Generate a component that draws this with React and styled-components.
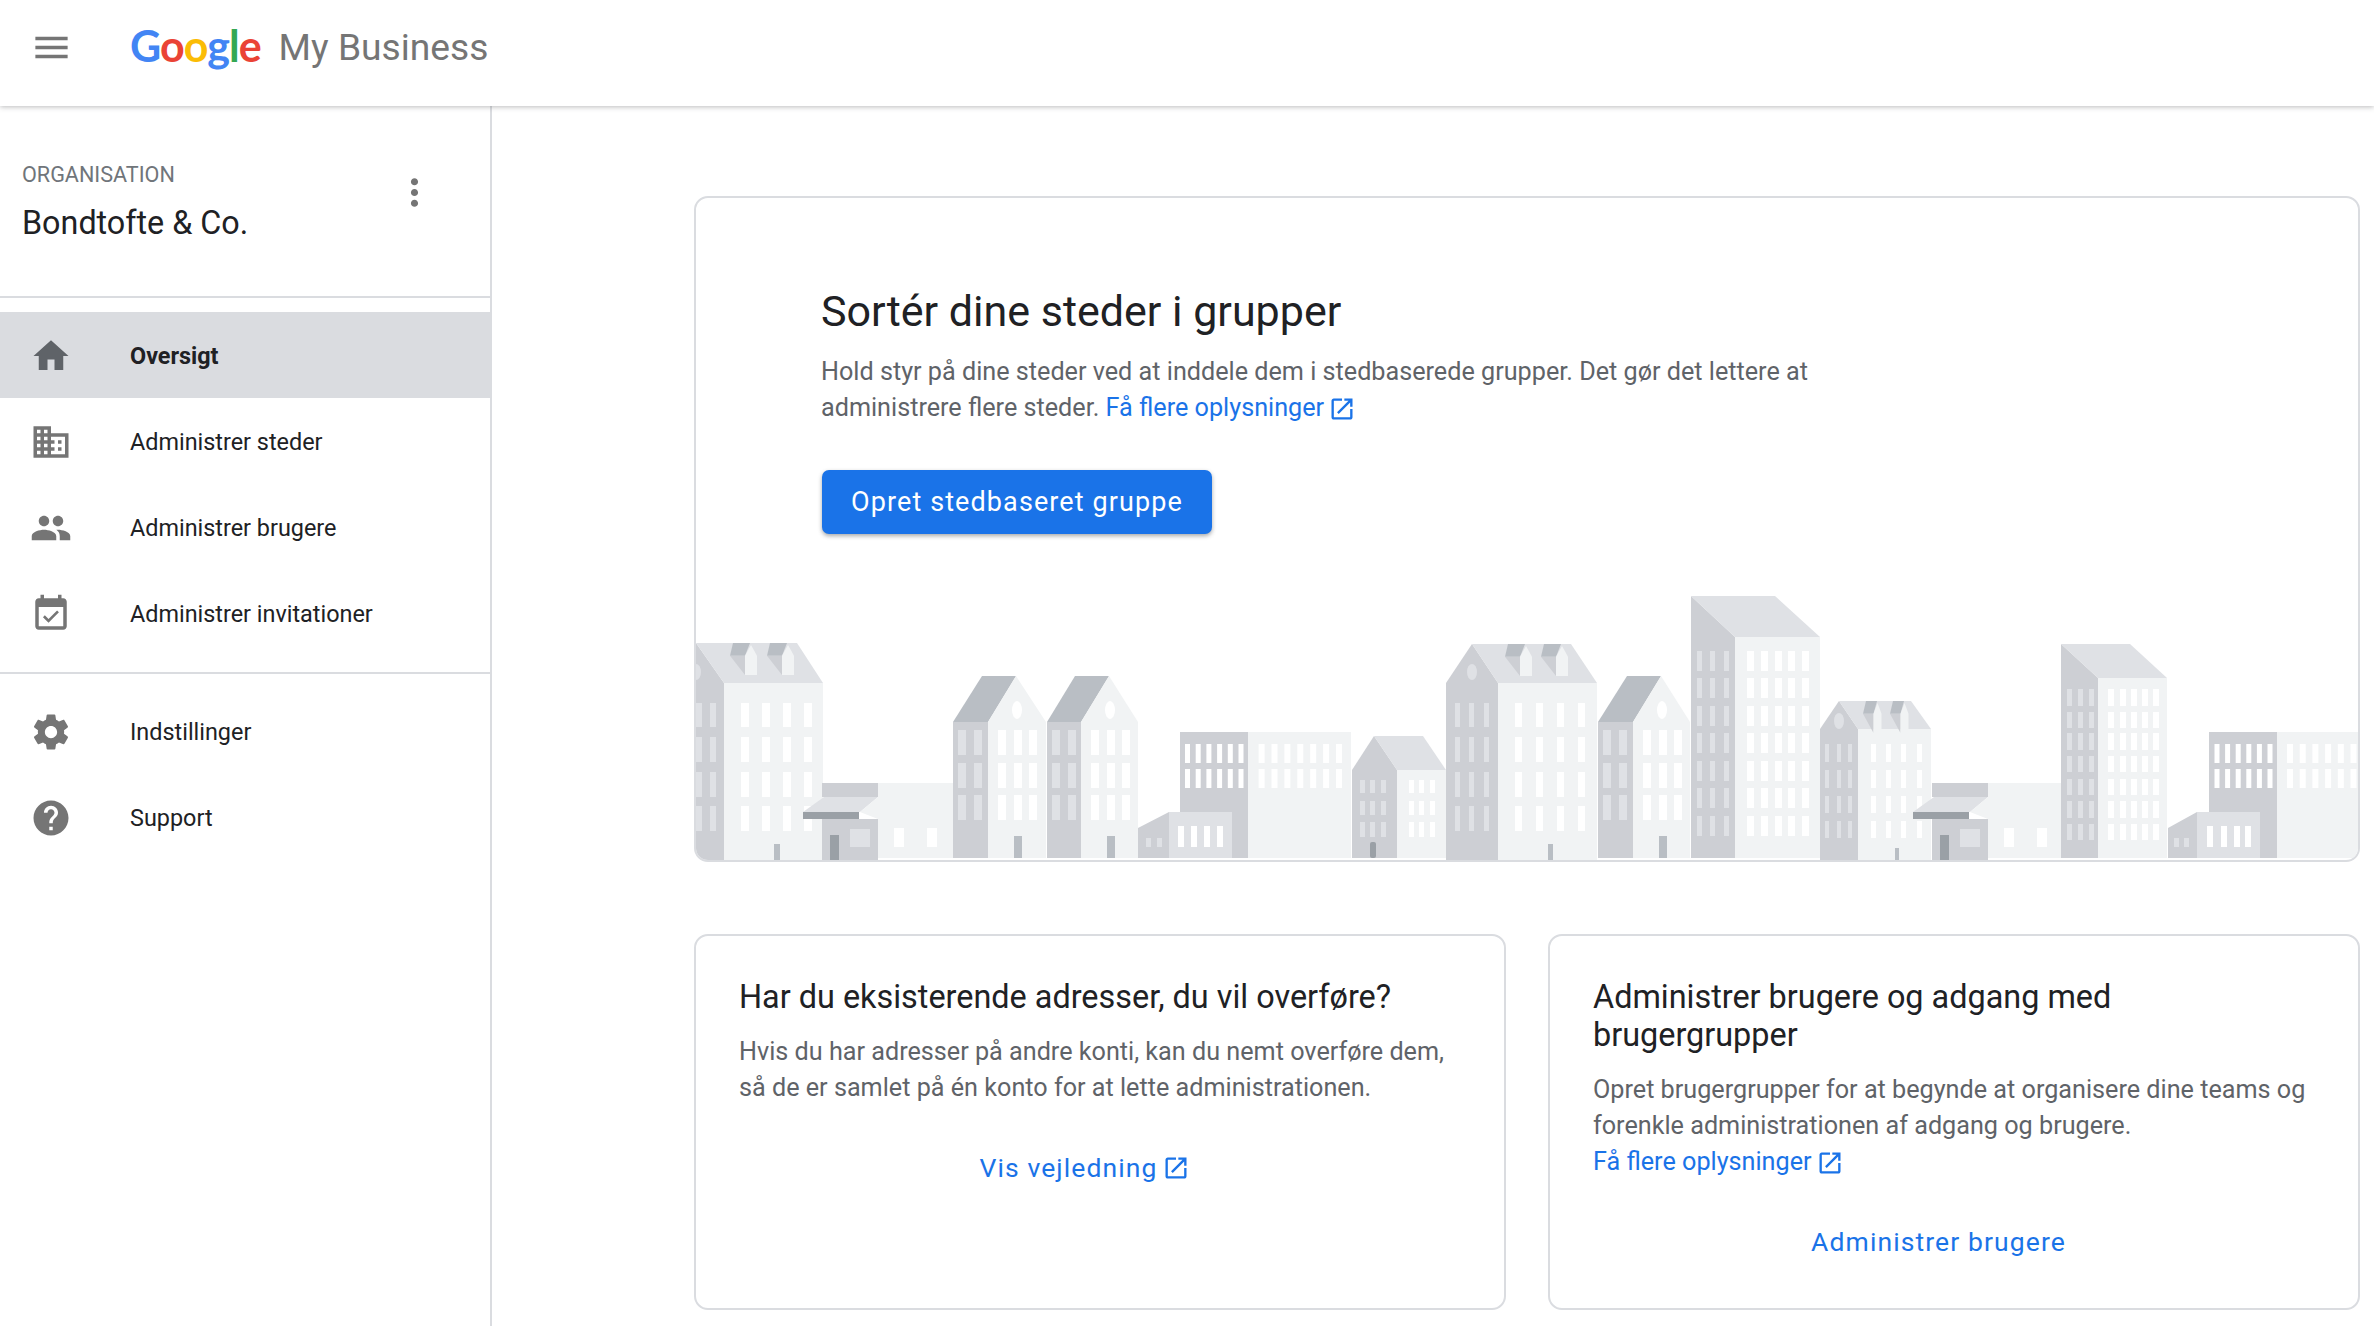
import React from 'react'
import styled, { createGlobalStyle } from 'styled-components'

const GlobalStyle = createGlobalStyle`
  html, body {
    margin: 0;
    padding: 0;
    background: #fff;
    font-family: Roboto, "Liberation Sans", sans-serif;
  }
  * { box-sizing: border-box; }
`

const Page = styled.div`
  width: 2374px;
  height: 1326px;
  overflow: hidden;
  display: flex;
  flex-direction: column;
`

const Header = styled.header`
  position: relative;
  z-index: 2;
  flex: none;
  height: 106px;
  padding: 0 0 12px 30px;
  display: flex;
  align-items: center;
  background: #fff;
  box-shadow: 0 1px 5px rgba(60, 64, 67, 0.35);
`

const Logo = styled.div`
  margin: 0 0 2px 57px;
  display: flex;
  align-items: flex-start;
  gap: 18px;
`

const GoogleWord = styled.span`
  font-family: Lato, sans-serif;
  font-size: 43px;
  font-weight: 700;
  line-height: 52px;
  letter-spacing: -1px;
`

const Letter = styled.span`
  color: ${(p) => p.$c};
`

const ProductName = styled.span`
  margin-top: 1px;
  font-size: 37.2px;
  line-height: 52px;
  color: #757575;
`

const Body = styled.div`
  flex: 1;
  display: flex;
  min-height: 0;
`

const Sidebar = styled.aside`
  flex: none;
  width: 492px;
  border-right: 2px solid #dadce0;
`

const OrgBlock = styled.div`
  height: 192px;
  padding: 57px 54px 0 22px;
  display: flex;
  justify-content: space-between;
  align-items: flex-start;
  border-bottom: 2px solid #dadce0;
`

const OrgLabel = styled.div`
  font-size: 21.6px;
  line-height: 24px;
  color: #70757a;
`

const OrgName = styled.div`
  margin-top: 16px;
  font-size: 32.3px;
  line-height: 40px;
  color: #202124;
`

const MoreButton = styled.div`
  margin-top: 8px;
  display: flex;
`

const NavList = styled.nav`
  padding: 14px 0 ${(p) => (p.$divider ? '16px' : '14px')};
  border-bottom: ${(p) => (p.$divider ? '2px solid #dadce0' : 'none')};
`

const NavItem = styled.div`
  height: 86px;
  padding: 2px 0 0 30px;
  display: flex;
  align-items: center;
  gap: 58px;
  font-size: 23.4px;
  font-weight: ${(p) => (p.$active ? 700 : 400)};
  color: #202124;
  background: ${(p) => (p.$active ? '#dadce0' : 'transparent')};
`

const Main = styled.main`
  flex: 1;
  padding: 90px 14px 0 202px;
  display: flex;
  flex-direction: column;
  gap: 72px;
`

const HeroCard = styled.section`
  height: 666px;
  display: flex;
  flex-direction: column;
  border: 2px solid #dadce0;
  border-radius: 14px;
  overflow: hidden;
`

const HeroText = styled.div`
  flex: 1;
  padding: 87px 0 0 125px;
`

const HeroTitle = styled.h1`
  margin: 0 0 17px;
  font-size: 43px;
  line-height: 52px;
  font-weight: 400;
  color: #202124;
`

const Paragraph = styled.p`
  margin: 0;
  font-size: 25.2px;
  line-height: 36px;
  color: #5f6368;
`

const TextLink = styled.a`
  color: #1a73e8;
`

const LinkGlyph = styled.svg`
  margin-left: 4px;
  vertical-align: -7px;
`

const PrimaryButton = styled.button`
  margin: 44px 0 0 1px;
  width: 390px;
  height: 64px;
  padding: 0;
  border: none;
  border-radius: 7px;
  background: #1a73e8;
  color: #fff;
  font-family: inherit;
  font-size: 27px;
  font-weight: 400;
  letter-spacing: 1.1px;
  box-shadow: 0 2px 4px rgba(60, 64, 67, 0.45);
`

const Skyline = styled.svg`
  flex: none;
  display: block;
  width: 100%;
  height: 270px;
`

const CardRow = styled.div`
  display: grid;
  grid-template-columns: 1fr 1fr;
  gap: 42px;
`

const InfoCard = styled.section`
  height: 376px;
  padding: 42px 30px 0 43px;
  border: 2px solid #dadce0;
  border-radius: 14px;
`

const CardTitle = styled.h2`
  margin: 0 0 18px;
  font-size: 32.4px;
  line-height: 38px;
  font-weight: 400;
  color: #202124;
`

const CardAction = styled.a`
  margin-top: 44px;
  padding-right: 44px;
  display: flex;
  justify-content: center;
  align-items: center;
  gap: 4px;
  font-size: 26.5px;
  line-height: 36px;
  font-weight: 400;
  letter-spacing: 1.1px;
  color: #1a73e8;
`

const paths = {
  menu: 'M3 18h18v-2H3v2zm0-5h18v-2H3v2zm0-7v2h18V6H3z',
  more: 'M12 8c1.1 0 2-.9 2-2s-.9-2-2-2-2 .9-2 2 .9 2 2 2zm0 2c-1.1 0-2 .9-2 2s.9 2 2 2 2-.9 2-2-.9-2-2-2zm0 6c-1.1 0-2 .9-2 2s.9 2 2 2 2-.9 2-2-.9-2-2-2z',
  home: 'M10 20v-6h4v6h5v-8h3L12 3 2 12h3v8z',
  domain: 'M12 7V3H2v18h20V7H12zM6 19H4v-2h2v2zm0-4H4v-2h2v2zm0-4H4V9h2v2zm0-4H4V5h2v2zm4 12H8v-2h2v2zm0-4H8v-2h2v2zm0-4H8V9h2v2zm0-4H8V5h2v2zm10 12h-8v-2h2v-2h-2v-2h2v-2h-2V9h8v10zm-2-8h-2v2h2v-2zm0 4h-2v2h2v-2z',
  people: 'M16 11c1.66 0 2.99-1.34 2.99-3S17.66 5 16 5c-1.66 0-3 1.34-3 3s1.34 3 3 3zm-8 0c1.66 0 2.99-1.34 2.99-3S9.66 5 8 5C6.34 5 5 6.34 5 8s1.34 3 3 3zm0 2c-2.33 0-7 1.17-7 3.5V19h14v-2.5c0-2.33-4.67-3.5-7-3.5zm8 0c-.29 0-.62.02-.97.05 1.16.84 1.97 1.97 1.97 3.45V19h6v-2.5c0-2.33-4.67-3.5-7-3.5z',
  event: 'M16.53 11.06L15.47 10l-4.88 4.88-2.12-2.12-1.06 1.06L10.59 17l5.94-5.94zM19 3h-1V1h-2v2H8V1H6v2H5c-1.11 0-1.99.9-1.99 2L3 19c0 1.1.89 2 2 2h14c1.1 0 2-.9 2-2V5c0-1.1-.9-2-2-2zm0 16H5V8h14v11z',
  settings: 'M19.43 12.98c.04-.32.07-.64.07-.98s-.03-.66-.07-.98l2.11-1.65c.19-.15.24-.42.12-.64l-2-3.46c-.12-.22-.39-.3-.61-.22l-2.49 1c-.52-.4-1.08-.73-1.69-.98l-.38-2.65C14.46 2.18 14.25 2 14 2h-4c-.25 0-.46.18-.49.42l-.38 2.65c-.61.25-1.17.59-1.69.98l-2.49-1c-.23-.09-.49 0-.61.22l-2 3.46c-.13.22-.07.49.12.64l2.11 1.65c-.04.32-.07.65-.07.98s.03.66.07.98l-2.11 1.65c-.19.15-.24.42-.12.64l2 3.46c.12.22.39.3.61.22l2.49-1c.52.4 1.08.73 1.69.98l.38 2.65c.03.24.24.42.49.42h4c.25 0 .46-.18.49-.42l.38-2.65c.61-.25 1.17-.59 1.69-.98l2.49 1c.23.09.49 0 .61-.22l2-3.46c.12-.22.07-.49-.12-.64l-2.11-1.65zM12 15.5c-1.93 0-3.5-1.57-3.5-3.5s1.57-3.5 3.5-3.5 3.5 1.57 3.5 3.5-1.57 3.5-3.5 3.5z',
  help: 'M12 2C6.48 2 2 6.48 2 12s4.48 10 10 10 10-4.48 10-10S17.52 2 12 2zm1 17h-2v-2h2v2zm2.07-7.75l-.9.92C13.45 12.9 13 13.5 13 15h-2v-.5c0-1.1.45-2.1 1.17-2.83l1.24-1.26c.37-.36.59-.86.59-1.41 0-1.1-.9-2-2-2s-2 .9-2 2H8c0-2.21 1.79-4 4-4s4 1.79 4 4c0 .88-.36 1.68-.93 2.25z',
  open: 'M19 19H5V5h7V3H5c-1.11 0-2 .9-2 2v14c0 1.1.89 2 2 2h14c1.1 0 2-.9 2-2v-7h-2v7zM14 3v2h3.59l-9.83 9.83 1.41 1.41L19 6.41V10h2V3h-7z',
}

function Icon({ name, size = 42, color = '#757575' }) {
  return (
    <svg width={size} height={size} viewBox="0 0 24 24" fill={color} style={{ flex: 'none' }}>
      <path d={paths[name]} />
    </svg>
  )
}

const WALL = '#cdcfd4'
const ROOF = '#dfe1e5'
const LIGHT = '#f1f3f4'
const SLATE = '#b9bec4'
const BAR = '#9aa0a6'

// x/y grids of window panes
function Panes({ xs, rows, w, color }) {
  return rows.flatMap(([y1, y2]) =>
    xs.map((x) => <rect key={`${x}-${y1}`} x={x} y={y1} width={w} height={y2 - y1} fill={color} />)
  )
}

function Dormer({ x, w, wh, top, bottom }) {
  const mid = top + (bottom - top) * 0.4
  return (
    <g>
      <polygon points={`${x + 3},${top} ${x + w},${top} ${x + w * 0.75},${mid} ${x},${mid}`} fill={SLATE} />
      <polygon points={`${x},${mid} ${x + w * 0.75},${mid} ${x + w * 0.75},${bottom}`} fill="#cdcfd4" />
      <polygon
        points={`${x + w * 0.75},${mid} ${x + w * 0.75 + wh / 2},${top + 2} ${x + w * 0.75 + wh},${mid} ${x + w * 0.75 + wh},${bottom} ${x + w * 0.75},${bottom}`}
        fill={LIGHT}
      />
    </g>
  )
}

function Mansard({ xl, apex, xm, xr, roofR, top, eave, bottom, dark, light, rows, dw, lw, dormers, oval, door }) {
  return (
    <g>
      <polygon points={`${xl},${eave} ${apex},${top} ${xm},${eave} ${xm},${bottom} ${xl},${bottom}`} fill={WALL} />
      <polygon points={`${apex},${top} ${roofR},${top} ${xr},${eave} ${xm},${eave}`} fill={ROOF} />
      <rect x={xm} y={eave} width={xr - xm} height={bottom - eave} fill={LIGHT} />
      {oval && <ellipse cx={apex} cy={oval} rx={5} ry={8} fill={ROOF} />}
      {dormers && dormers.map((d) => <Dormer key={d.x} top={top} bottom={top + 32} {...d} />)}
      <Panes xs={dark} rows={rows} w={dw} color={ROOF} />
      <Panes xs={light} rows={rows} w={lw} color="#fff" />
      {door && <rect x={door[0]} y={bottom - door[1]} width={door[2]} height={door[1]} fill={SLATE} />}
    </g>
  )
}

function GableHouse({ xl, xm, xr, dx }) {
  const top = 676
  const eave = 722
  const bottom = 858
  const rows = [[730, 755], [763, 788], [795, 820]]
  const apex = xm + 28
  return (
    <g>
      <rect x={xl} y={eave} width={xm - xl} height={bottom - eave} fill={WALL} />
      <polygon points={`${xl},${eave} ${apex - 34},${top} ${apex},${top} ${xm},${eave}`} fill={SLATE} />
      <polygon points={`${xm},${eave} ${apex},${top} ${xr},${eave} ${xr},${bottom} ${xm},${bottom}`} fill={LIGHT} />
      <ellipse cx={apex + 1} cy={710} rx={5} ry={9} fill="#fff" />
      <Panes xs={[xl + 5, xl + 21]} rows={rows} w={8} color={ROOF} />
      <Panes xs={[xm + dx, xm + dx + 16, xm + dx + 31]} rows={rows} w={8} color="#fff" />
      <rect x={xm + dx + 16} y={836} width={8} height={22} fill={SLATE} />
    </g>
  )
}

function Shop({ x, offset }) {
  const o = offset
  return (
    <g>
      <rect x={x + 56} y={783} width={o} height={75} fill={LIGHT} />
      <rect x={x} y={783} width={56} height={14} fill={WALL} />
      <polygon points={`${x - 19},812 ${x + 2},797 ${x + 56},797 ${x + 38},812`} fill={ROOF} />
      <polygon points={`${x + 38},812 ${x + 56},797 ${x + 56},819`} fill={LIGHT} />
      <rect x={x} y={819} width={56} height={41} fill={WALL} />
      <rect x={x - 19} y={812} width={56} height={7} fill={BAR} />
      <rect x={x + 8} y={835} width={9} height={25} fill={BAR} />
      <rect x={x + 28} y={829} width={20} height={18} fill={ROOF} />
      <rect x={x + 72} y={828} width={10} height={19} fill="#fff" />
      <rect x={x + 105} y={828} width={10} height={19} fill="#fff" />
    </g>
  )
}

function Terrace({ x1, x2, x3, dark, light, dw, lw }) {
  const rows = [[744, 763], [769, 788]]
  return (
    <g>
      <rect x={x1} y={732} width={x2 - x1} height={126} fill={WALL} />
      <rect x={x2} y={732} width={x3 - x2} height={126} fill={LIGHT} />
      <Panes xs={dark} rows={rows} w={dw} color="#fff" />
      <Panes xs={light} rows={rows} w={lw} color="#fff" />
    </g>
  )
}

function Annex({ x, xm, xr, dark, light }) {
  return (
    <g>
      <polygon points={`${x},828 ${xm},812 ${xm},858 ${x},858`} fill={WALL} />
      <rect x={xm} y={812} width={xr - xm} height={46} fill={ROOF} />
      <Panes xs={dark} rows={[[838, 847]]} w={5} color={ROOF} />
      <Panes xs={light} rows={[[826, 847]]} w={6} color="#fff" />
    </g>
  )
}

const range = (start, step, n) => Array.from({ length: n }, (_, i) => start + i * step)

const tallRows = [[703, 727], [737, 762], [772, 797], [806, 831]]
const towerRows = [[651, 671], [678, 698], [706, 726], [733, 753], [761, 781], [788, 808], [816, 836]]
const slimRows = [[689, 706], [712, 728], [733, 750], [756, 772], [779, 795], [801, 818], [824, 840]]

function CityIllustration() {
  return (
    <Skyline viewBox="696 590 1662 270" preserveAspectRatio="none">
      <Mansard
        xl={680} apex={696} xm={724} xr={823} roofR={797} top={643} eave={683} bottom={860}
        dark={[696, 710]} light={[741, 762, 783, 804]} rows={tallRows} dw={6} lw={8} oval={672}
        dormers={[{ x: 730, w: 20, wh: 12 }, { x: 767, w: 20, wh: 12 }]} door={[774, 16, 6]}
      />
      <Shop x={822} offset={75} />
      <GableHouse xl={953} xm={988} xr={1046} dx={10} />
      <GableHouse xl={1047} xm={1081} xr={1138} dx={10} />
      <Terrace x1={1180} x2={1248} x3={1351} dark={range(1185, 10.7, 6)} light={range(1258.6, 12.9, 7)} dw={5} lw={6} />
      <Annex x={1138} xm={1169} xr={1232} dark={[1146, 1157]} light={[1178, 1191, 1204, 1217]} />
      <Mansard
        xl={1352} apex={1374} xm={1397} xr={1446} roofR={1423} top={736} eave={770} bottom={858}
        dark={[1360, 1370, 1381]} light={[1409, 1419, 1430]} rows={[[780, 793], [801, 815], [822, 837]]} dw={5} lw={5}
      />
      <rect x={1370} y={842} width={6} height={16} rx={2} fill={BAR} />
      <Mansard
        xl={1446} apex={1472} xm={1498} xr={1597} roofR={1571} top={644} eave={683} bottom={860}
        dark={[1455, 1469, 1484]} light={[1515, 1536, 1557, 1578]} rows={tallRows} dw={5} lw={7} oval={672}
        dormers={[{ x: 1505, w: 20, wh: 12 }, { x: 1541, w: 20, wh: 12 }]} door={[1548, 16, 5]}
      />
      <GableHouse xl={1598} xm={1633} xr={1690} dx={10} />
      <Mansard
        xl={1691} apex={1691} xm={1735} xr={1820} roofR={1775} top={596} eave={637} bottom={858}
        dark={[1697, 1710, 1724]} light={[1747, 1761, 1775, 1788, 1802]} rows={towerRows} dw={5} lw={7}
      />
      <Mansard
        xl={1820} apex={1839} xm={1858} xr={1931} roofR={1911} top={701} eave={729} bottom={860}
        dark={[1825, 1837, 1848]} light={[1871, 1886, 1901, 1917]} rows={[[744, 762], [770, 788], [796, 813], [821, 838]]} dw={4} lw={5} oval={721}
        dormers={[{ x: 1863, w: 14, wh: 8 }, { x: 1890, w: 14, wh: 8 }]} door={[1895, 12, 4]}
      />
      <Shop x={1932} offset={73} />
      <Mansard
        xl={2061} apex={2061} xm={2098} xr={2167} roofR={2130} top={644} eave={678} bottom={858}
        dark={[2067, 2078, 2089]} light={[2108, 2120, 2131, 2142, 2153]} rows={slimRows} dw={5} lw={6}
      />
      <Terrace x1={2209} x2={2277} x3={2358} dark={range(2214.5, 10.6, 6)} light={range(2287, 12.7, 6)} dw={5} lw={6} />
      <Annex x={2168} xm={2197} xr={2260} dark={[2174, 2184]} light={[2207, 2221, 2234, 2245]} />
    </Skyline>
  )
}

const mainNav = [
  { icon: 'home', label: 'Oversigt', active: true },
  { icon: 'domain', label: 'Administrer steder' },
  { icon: 'people', label: 'Administrer brugere' },
  { icon: 'event', label: 'Administrer invitationer' },
]

const footerNav = [
  { icon: 'settings', label: 'Indstillinger' },
  { icon: 'help', label: 'Support' },
]

const googleLetters = [
  ['G', '#4285f4'],
  ['o', '#ea4335'],
  ['o', '#fbbc05'],
  ['g', '#4285f4'],
  ['l', '#34a853'],
  ['e', '#ea4335'],
]

function NavGroup({ items, divider }) {
  return (
    <NavList $divider={divider}>
      {items.map((item) => (
        <NavItem key={item.label} $active={item.active}>
          <Icon name={item.icon} color={item.active ? '#5f6368' : '#757575'} />
          {item.label}
        </NavItem>
      ))}
    </NavList>
  )
}

function LearnMore() {
  return (
    <TextLink>
      Få flere oplysninger
      <LinkGlyph width={28} height={28} viewBox="0 0 24 24" fill="#1a73e8">
        <path d={paths.open} />
      </LinkGlyph>
    </TextLink>
  )
}

export default function App() {
  return (
    <Page>
      <GlobalStyle />
      <Header>
        <Icon name="menu" size={43} />
        <Logo>
          <GoogleWord>
            {googleLetters.map(([ch, c], i) => (
              <Letter key={i} $c={c}>{ch}</Letter>
            ))}
          </GoogleWord>
          <ProductName>My Business</ProductName>
        </Logo>
      </Header>
      <Body>
        <Sidebar>
          <OrgBlock>
            <div>
              <OrgLabel>ORGANISATION</OrgLabel>
              <OrgName>Bondtofte &amp; Co.</OrgName>
            </div>
            <MoreButton>
              <Icon name="more" size={43} />
            </MoreButton>
          </OrgBlock>
          <NavGroup items={mainNav} divider />
          <NavGroup items={footerNav} />
        </Sidebar>
        <Main>
          <HeroCard>
            <HeroText>
              <HeroTitle>Sortér dine steder i grupper</HeroTitle>
              <Paragraph>
                Hold styr på dine steder ved at inddele dem i stedbaserede grupper. Det gør det lettere at
                <br />
                administrere flere steder. <LearnMore />
              </Paragraph>
              <PrimaryButton>Opret stedbaseret gruppe</PrimaryButton>
            </HeroText>
            <CityIllustration />
          </HeroCard>
          <CardRow>
            <InfoCard>
              <CardTitle>Har du eksisterende adresser, du vil overføre?</CardTitle>
              <Paragraph>
                Hvis du har adresser på andre konti, kan du nemt overføre dem,
                <br />
                så de er samlet på én konto for at lette administrationen.
              </Paragraph>
              <CardAction>
                Vis vejledning
                <Icon name="open" size={28} color="#1a73e8" />
              </CardAction>
            </InfoCard>
            <InfoCard>
              <CardTitle>
                Administrer brugere og adgang med
                <br />
                brugergrupper
              </CardTitle>
              <Paragraph>
                Opret brugergrupper for at begynde at organisere dine teams og
                <br />
                forenkle administrationen af adgang og brugere.
                <br />
                <LearnMore />
              </Paragraph>
              <CardAction>Administrer brugere</CardAction>
            </InfoCard>
          </CardRow>
        </Main>
      </Body>
    </Page>
  )
}
